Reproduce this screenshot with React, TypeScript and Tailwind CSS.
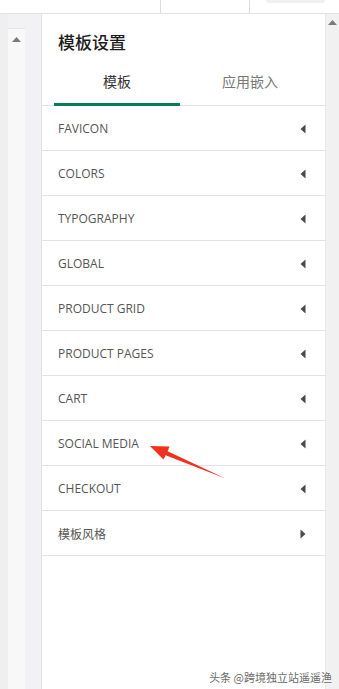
import React from "react";

const rows = [
  "FAVICON",
  "COLORS",
  "TYPOGRAPHY",
  "GLOBAL",
  "PRODUCT GRID",
  "PRODUCT PAGES",
  "CART",
  "SOCIAL MEDIA",
  "CHECKOUT",
];

const font = { fontFamily: '"Open Sans", "Noto Sans CJK SC", sans-serif' };

function LeftTri() {
  return (
    <svg width="6" height="10" viewBox="0 0 6 10">
      <path d="M5.5 0.5 L0.5 5 L5.5 9.5 Z" fill="#4a4a4a" />
    </svg>
  );
}
function RightTri() {
  return (
    <svg width="6" height="10" viewBox="0 0 6 10">
      <path d="M0.5 0.5 L5.5 5 L0.5 9.5 Z" fill="#4a4a4a" />
    </svg>
  );
}
function UpTri() {
  return (
    <svg width="9" height="5" viewBox="0 0 9 5">
      <path d="M0 5 L4.5 0 L9 5 Z" fill="#7a7a7a" />
    </svg>
  );
}

export default function App() {
  return (
    <div
      className="relative w-[339px] h-[689px] overflow-hidden bg-white flex flex-col"
      style={font}
    >
      {/* top bar */}
      <div className="h-[14px] flex border-b border-[#e2e2e2] bg-white shrink-0">
        <div className="w-[161px] border-r border-[#dcdcdc]" />
        <div className="w-[89px] border-r border-[#dcdcdc]" />
        <div className="flex-1 flex items-start pl-[16px]">
          <div className="w-[59px] h-[3px] rounded-b-[3px] bg-[#f0f0f0]" />
        </div>
      </div>

      <div className="flex-1 flex min-h-0">
        {/* left strip */}
        <div className="w-[41px] flex bg-[#f2f2f4] shrink-0">
          <div className="w-[8px] bg-[#efefef]" />
          <div className="w-[17px] mt-[14px] bg-[#f8f8f8] border-t border-[#e6e6e6] flex justify-center pt-[8px]">
            <UpTri />
          </div>
        </div>

        {/* panel */}
        <div className="w-[284px] bg-white border-l border-[#e2e2e2] flex flex-col shrink-0">
          <div className="pl-[16px] pt-[16px] h-[40px]">
            <div
              className="text-[17px] leading-[24px] font-medium text-[#1c1c1c]"
              style={{ fontFamily: '"Noto Sans CJK SC", sans-serif' }}
            >
              模板设置
            </div>
          </div>
          <div className="h-[52px] flex pl-[12px] border-b border-[#e3e3e3]">
            <div
              className="w-[126px] h-[52px] -mb-px border-b-[3px] border-[#087b5a] flex justify-center pt-[17px] text-[14px] leading-[20px] text-[#333]"
              style={{ fontFamily: '"Noto Sans CJK SC", sans-serif' }}
            >
              模板
            </div>
            <div
              className="w-[140px] flex justify-center pt-[17px] text-[14px] leading-[20px] text-[#777]"
              style={{ fontFamily: '"Noto Sans CJK SC", sans-serif' }}
            >
              应用嵌入
            </div>
          </div>
          {rows.map((r) => (
            <div
              key={r}
              className="h-[45px] flex items-center justify-between pl-[16px] pr-[19px] pt-[1px] border-b border-[#e3e3e3]"
            >
              <span className="text-[12px] text-[#555]">{r}</span>
              <LeftTri />
            </div>
          ))}
          <div className="h-[45px] flex items-center justify-between pl-[16px] pr-[19px] pt-[1px] border-b border-[#e3e3e3]">
            <span
              className="text-[12px] text-[#555]"
              style={{ fontFamily: '"Noto Sans CJK SC", sans-serif' }}
            >
              模板风格
            </span>
            <RightTri />
          </div>
        </div>

        {/* right scrollbar */}
        <div className="flex-1 bg-[#f1f1f1] border-l border-[#e8e8e8] flex justify-center pt-[6px]">
          <UpTri />
        </div>
      </div>

      {/* red annotation arrow */}
      <svg
        className="absolute left-0 top-0 pointer-events-none"
        width="339"
        height="689"
        viewBox="0 0 339 689"
      >
        <path
          d="M150 446 L169.5 446.5 L167.6 451.2 L225.5 478.5 L165.6 455.2 L163.5 459.5 Z"
          fill="#f0311f"
        />
      </svg>

      {/* watermark */}
      <div
        className="absolute right-[7px] bottom-[5px] text-[11px] leading-[14px] text-[#6a6a6a]"
        style={{ fontFamily: '"Noto Sans CJK SC", sans-serif', textShadow: "0 0 2px #fff" }}
      >
        头条 @跨境独立站遥遥渔
      </div>
    </div>
  );
}
